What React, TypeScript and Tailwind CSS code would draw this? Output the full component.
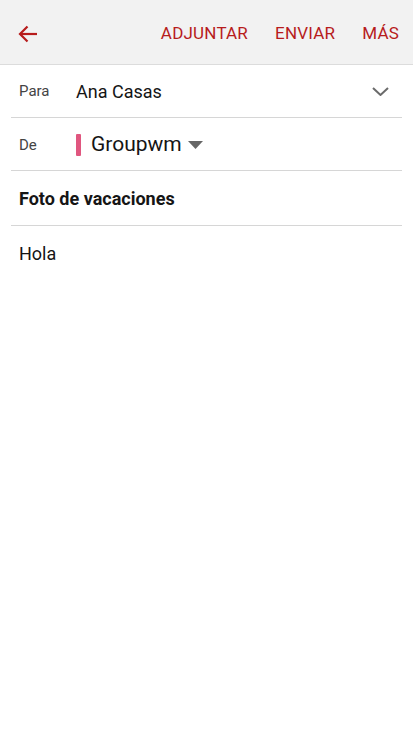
import React from "react";

export default function App() {
  return (
    <div className="w-[413px] h-[736px] bg-white" style={{ fontFamily: "Roboto, 'Noto Sans', sans-serif" }}>
      <div className="h-[65px] bg-[#f2f2f2] border-b border-[#dcdcdc] flex items-center pt-[3px]">
        <div className="pl-[18px] w-[60px] flex items-center">
          <svg width="20" height="18" viewBox="0 0 20 18" fill="none" stroke="#b71c1c" strokeWidth="2.2">
            <path d="M19 9H2.5" />
            <path d="M9.5 1.5L2 9l7.5 7.5" />
          </svg>
        </div>
        <div className="flex-1 flex justify-end items-center text-[17px] text-[#b71c1c] tracking-[0.2px] pr-[14px]">
          <span>ADJUNTAR</span>
          <span className="ml-[27px]">ENVIAR</span>
          <span className="ml-[27px]">MÁS</span>
        </div>
      </div>
      <div className="mx-[11px]">
        <div className="h-[53px] border-b border-[#d6d6d6] flex items-center">
          <span className="w-[65px] pl-[8px] text-[15px] text-[#444]">Para</span>
          <span className="flex-1 text-[18px] text-[#151515]">Ana Casas</span>
          <svg className="mr-[13px]" width="17" height="9" viewBox="0 0 17 9" fill="none" stroke="#6b6b6b" strokeWidth="2">
            <path d="M1 1l7.5 7 7.5-7" />
          </svg>
        </div>
        <div className="h-[53px] border-b border-[#d6d6d6] flex items-center pt-[2px]">
          <span className="w-[65px] pl-[8px] text-[15px] text-[#444]">De</span>
          <span className="w-[5px] h-[22px] bg-[#e0567f] rounded-[1px]" />
          <span className="ml-[10px] text-[21px] text-[#151515]">Groupwm</span>
          <svg className="ml-[6px]" width="15" height="8" viewBox="0 0 15 8">
            <path d="M0 0h15L7.5 8z" fill="#666" />
          </svg>
        </div>
        <div className="h-[55px] border-b border-[#d6d6d6] flex items-center">
          <span className="pl-[8px] text-[18px] font-bold text-[#151515]">Foto de vacaciones</span>
        </div>
        <div className="pt-[14px] pl-[8px] text-[18px] text-[#151515]">Hola</div>
      </div>
    </div>
  );
}
